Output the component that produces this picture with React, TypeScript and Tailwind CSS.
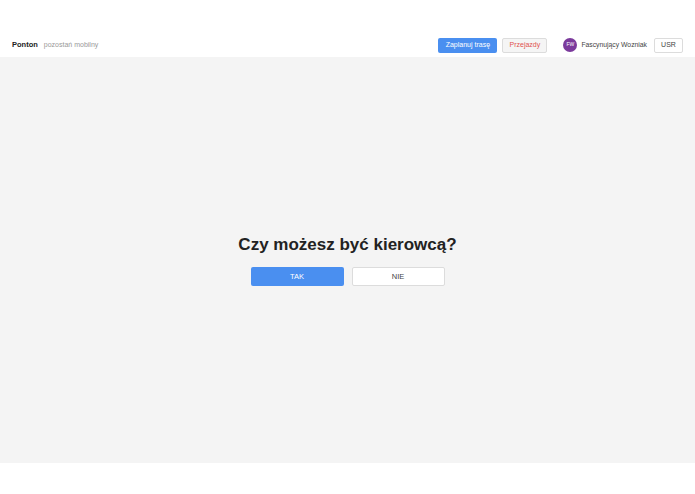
export default function App() {
  return (
    <div className="w-[695px] h-[494px] bg-white font-['Liberation_Sans',Arial,sans-serif] text-[#333]">
      <header className="h-[57px] pt-[33px] flex items-center justify-between pl-3 pr-3">
        <div className="flex items-baseline gap-[6px]">
          <span className="text-[7.5px] font-bold text-[#222]">Ponton</span>
          <span className="text-[7px] text-[#999]">pozostań mobilny</span>
        </div>
        <div className="flex items-center">
          <button className="h-[15px] w-[59px] rounded-[2px] bg-[#4a8ff0] text-white text-[7px]">Zaplanuj trasę</button>
          <button className="ml-[5px] h-[15px] w-[45px] rounded-[2px] bg-[#f5f5f5] border border-[#dcdcdc] text-[#e0524f] text-[7px]">Przejazdy</button>
          <div className="ml-[16px] w-[14px] h-[14px] rounded-full bg-[#7b3a9c] text-white text-[5px] flex items-center justify-center">FW</div>
          <span className="ml-[4px] text-[6.8px] text-[#444]">Fascynujący Wozniak</span>
          <button className="ml-[7px] h-[15px] w-[29px] rounded-[2px] bg-white border border-[#dcdcdc] text-[#444] text-[7px]">USR</button>
        </div>
      </header>
      <main className="h-[406px] bg-[#f4f4f4] flex flex-col items-center justify-center">
        <h1 className="text-[17px] font-semibold text-[#222] leading-[22px]">Czy możesz być kierowcą?</h1>
        <div className="mt-[11px] flex gap-[8px]">
          <button className="w-[93px] h-[19px] rounded-[2px] bg-[#4a8ff0] text-white text-[7.5px]">TAK</button>
          <button className="w-[93px] h-[19px] rounded-[2px] bg-white border border-[#dcdcdc] text-[#444] text-[7.5px]">NIE</button>
        </div>
      </main>
    </div>
  );
}
